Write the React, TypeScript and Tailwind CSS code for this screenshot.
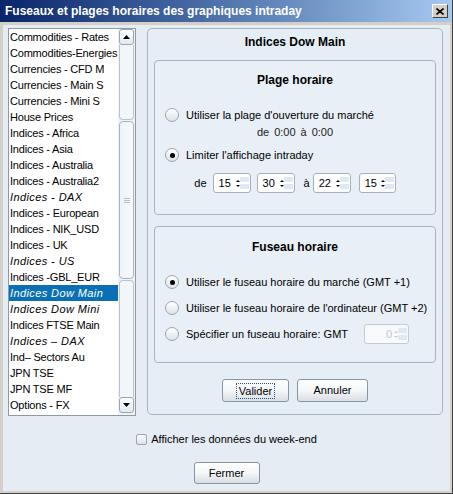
import type { ReactNode } from "react";

type Item = { label: string; italic?: boolean };

const items: Item[] = [
  { label: "Commodities - Rates" },
  { label: "Commodities-Energies" },
  { label: "Currencies - CFD M" },
  { label: "Currencies - Main S" },
  { label: "Currencies - Mini S" },
  { label: "House Prices" },
  { label: "Indices - Africa" },
  { label: "Indices - Asia" },
  { label: "Indices - Australia" },
  { label: "Indices - Australia2" },
  { label: "Indices - DAX", italic: true },
  { label: "Indices - European" },
  { label: "Indices - NIK_USD" },
  { label: "Indices - UK" },
  { label: "Indices - US", italic: true },
  { label: "Indices -GBL_EUR" },
  { label: "Indices Dow Main", italic: true },
  { label: "Indices Dow Mini", italic: true },
  { label: "Indices FTSE Main" },
  { label: "Indices – DAX", italic: true },
  { label: "Ind– Sectors Au" },
  { label: "JPN TSE" },
  { label: "JPN TSE MF" },
  { label: "Options - FX" },
];

const selected = 16;

function Radio({ checked }: { checked?: boolean }) {
  return (
    <span className="w-[14px] h-[14px] shrink-0 rounded-full border border-[#9ba6b2] bg-linear-to-b from-white to-[#dde3e9] flex items-center justify-center">
      {checked && <span className="w-[5px] h-[5px] rounded-full bg-black" />}
    </span>
  );
}

function Arrows({ disabled }: { disabled?: boolean }) {
  const c = disabled ? "#c4ccd4" : "#000";
  return (
    <svg width="16" height="18" viewBox="0 0 16 18" className="shrink-0">
      <rect x="6" y="3" width="9" height="5" fill="#dde9f3" />
      <rect x="6" y="10" width="9" height="5" fill="#dde9f3" />
      <path d="M2 8 L4 6 L6 8 Z" fill={c} />
      <path d="M2 11 L6 11 L4 13 Z" fill={c} />
    </svg>
  );
}

function Spinner({ value, className }: { value: string; className: string }) {
  return (
    <div className={`h-[20px] rounded-[3px] border border-[#a5b0bb] bg-white flex items-center justify-between pl-[5px] ${className}`}>
      <span>{value}</span>
      <Arrows />
    </div>
  );
}

function Button({ children, className, focus }: { children: ReactNode; className: string; focus?: boolean }) {
  return (
    <div className={`rounded-[3px] border border-[#8796a5] bg-linear-to-b from-white via-[#f4f6f8] to-[#d9dee3] flex items-center justify-center ${className}`}>
      <span className={focus ? "outline outline-1 outline-dotted outline-[#2a4e88] px-[2px] leading-[14px]" : ""}>{children}</span>
    </div>
  );
}

function ScrollBar() {
  return (
    <div className="w-[17px] h-full flex flex-col bg-[#eef3f7] px-[1px]">
      <div className="h-[16px] shrink-0 rounded-[3px] border border-[#9aa6b2] bg-linear-to-b from-white to-[#e4e9ee] flex items-center justify-center">
        <svg width="7" height="4" viewBox="0 0 7 4"><path d="M0 4 L3.5 0 L7 4 Z" fill="#000" /></svg>
      </div>
      <div className="h-[75px] shrink-0 rounded-b-[4px] border-x border-b border-[#b9c4ce] bg-[#f2f6f9]" />
      <div className="h-[158px] shrink-0 mt-[1px] rounded-[4px] border border-[#a8b4bf] bg-linear-to-r from-[#eef3f7] to-[#f8fafc] flex items-center justify-center">
        <div className="flex flex-col gap-[1px]">
          <span className="w-[6px] h-px bg-[#b3bec8]" />
          <span className="w-[6px] h-px bg-[#b3bec8]" />
          <span className="w-[6px] h-px bg-[#b3bec8]" />
        </div>
      </div>
      <div className="flex-1 mt-[1px] rounded-t-[4px] border-x border-t border-[#b9c4ce] bg-[#f2f6f9]" />
      <div className="h-[16px] shrink-0 mb-[2px] rounded-[3px] border border-[#9aa6b2] bg-linear-to-b from-white to-[#e4e9ee] flex items-center justify-center">
        <svg width="7" height="4" viewBox="0 0 7 4"><path d="M0 0 L7 0 L3.5 4 Z" fill="#000" /></svg>
      </div>
    </div>
  );
}

export default function App() {
  return (
    <div className="w-[453px] h-[494px] flex flex-col bg-[#d4d0c8] border-r border-b border-[#404040] font-['Liberation_Sans',Arial,sans-serif] text-[11px] text-black overflow-hidden select-none">
      {/* Title bar */}
      <div className="h-[22px] shrink-0 bg-linear-to-r from-[#0a246a] to-[#a6caf0] flex items-center pl-[5px] pr-[4px]">
        <span className="text-white font-bold text-[12px]">Fuseaux et plages horaires des graphiques intraday</span>
        <div className="ml-auto w-[16px] h-[14px] bg-[#d4d0c8] border-t border-l border-white border-r border-b border-r-[#404040] border-b-[#404040] flex items-center justify-center">
          <svg width="8" height="7" viewBox="0 0 8 7">
            <path d="M0.5 0.5 L7.5 6.5 M7.5 0.5 L0.5 6.5" stroke="#000" strokeWidth="1.6" />
          </svg>
        </div>
      </div>

      {/* Dialog body */}
      <div className="flex-1 ml-[3px] mr-[2px] mt-[3px] mb-[2px] bg-[#e5ecf3] flex flex-col">
        <div className="flex pt-[3px] pl-[5px] gap-[11px]">
          {/* Instrument list */}
          <div className="w-[128px] h-[388px] border border-[#8c99a6] bg-white flex">
            <div className="flex-1 min-w-0 overflow-hidden">
              {items.map((it, i) => (
                <div
                  key={it.label + i}
                  className={`h-[16px] leading-[16px] pl-[1px] whitespace-nowrap ${i === selected ? "bg-[#0a6fb4] text-white" : ""} ${it.italic ? "italic tracking-[0.4px]" : "tracking-[-0.2px]"}`}
                >
                  {it.label}
                </div>
              ))}
            </div>
            <ScrollBar />
          </div>

          {/* Settings panel */}
          <div className="w-[296px] h-[387px] rounded-[5px] border border-[#a9b4be] bg-[#e6eef5] flex flex-col">
            <div className="mt-[5px] h-[16px] leading-[16px] text-center font-bold text-[12px]">Indices Dow Main</div>

            <div className="mt-[10px] mx-auto w-[282px] h-[155px] rounded-[4px] border border-[#a9b4be] bg-[#e8eff6] flex flex-col">
              <div className="mt-[11px] h-[16px] leading-[16px] text-center font-bold text-[12px]">Plage horaire</div>
              <div className="mt-[19px] h-[16px] flex items-center pl-[10px] gap-[7px]">
                <Radio />
                <span>Utiliser la plage d'ouverture du marché</span>
              </div>
              <div className="mt-[1px] h-[16px] flex items-center justify-center gap-[5px] text-[#222]">
                <span>de</span>
                <span>0:00</span>
                <span>à</span>
                <span>0:00</span>
              </div>
              <div className="mt-[7px] h-[16px] flex items-center pl-[10px] gap-[7px]">
                <Radio checked />
                <span>Limiter l'affichage intraday</span>
              </div>
              <div className="mt-[10px] flex items-center justify-center">
                <span className="mr-[6px]">de</span>
                <Spinner value="15" className="w-[38px]" />
                <Spinner value="30" className="w-[38px] ml-[6px]" />
                <span className="ml-[9px] mr-[3px]">à</span>
                <Spinner value="22" className="w-[38px]" />
                <Spinner value="15" className="w-[37px] ml-[8px]" />
              </div>
            </div>

            <div className="mt-[11px] mx-auto w-[282px] h-[137px] rounded-[4px] border border-[#a9b4be] bg-[#e8eff6] flex flex-col">
              <div className="mt-[12px] h-[16px] leading-[16px] text-center font-bold text-[12px]">Fuseau horaire</div>
              <div className="mt-[19px] h-[16px] flex items-center pl-[10px] gap-[7px]">
                <Radio checked />
                <span>Utiliser le fuseau horaire du marché (GMT +1)</span>
              </div>
              <div className="mt-[10px] h-[16px] flex items-center pl-[10px] gap-[7px]">
                <Radio />
                <span>Utiliser le fuseau horaire de l'ordinateur (GMT +2)</span>
              </div>
              <div className="mt-[8px] h-[20px] flex items-center pl-[10px] gap-[7px]">
                <Radio />
                <span>Spécifier un fuseau horaire: GMT</span>
                <div className="ml-[9px] w-[45px] h-[20px] rounded-[3px] border border-[#c3ccd5] bg-[#f7f9fb] flex items-center justify-end text-[#c0c8d0]">
                  <span>0</span>
                  <Arrows disabled />
                </div>
              </div>
            </div>

            <div className="mt-[16px] flex justify-center gap-[8px]">
              <Button className="w-[67px] h-[23px]" focus>Valider</Button>
              <Button className="w-[71px] h-[23px]">Annuler</Button>
            </div>
          </div>
        </div>

        <div className="mt-[18px] h-[11px] flex items-center justify-center gap-[4px]">
          <span className="w-[11px] h-[11px] rounded-[2px] border border-[#9ba6b2] bg-linear-to-b from-white to-[#dde3e9]" />
          <span>Afficher les données du week-end</span>
        </div>

        <div className="mt-[17px] flex justify-center">
          <Button className="w-[66px] h-[22px]">Fermer</Button>
        </div>
      </div>
    </div>
  );
}
